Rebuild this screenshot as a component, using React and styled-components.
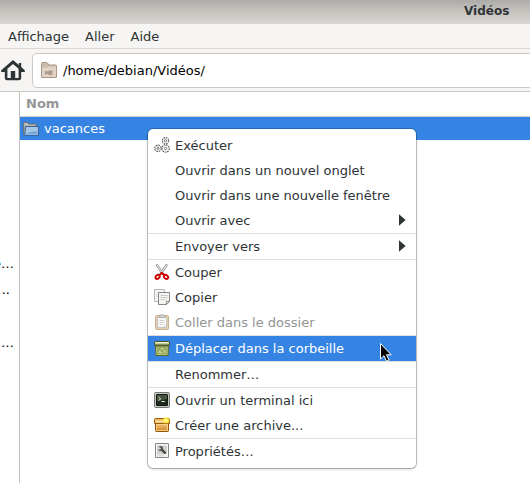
import React from "react";
import styled, { createGlobalStyle, css } from "styled-components";

const GlobalStyle = createGlobalStyle`
  * { box-sizing: border-box; }
  html, body { margin: 0; overflow: hidden; background: #fff; }
  body { font: 13px/25px "DejaVu Sans", sans-serif; color: #2e3436; }
  svg { display: block; flex: none; }
`;

const Window = styled.main`
  position: relative;
  display: flex;
  flex-direction: column;
  width: 530px;
  height: 483px;
  overflow: hidden;
  background: #fff;
`;

const TitleBar = styled.header`
  height: 24px;
  padding-left: 464px;
  background: linear-gradient(#acaba8, #c5c2be 45%, #d8d5d2);
  font-size: 12px;
  font-weight: bold;
  line-height: 22px;
  white-space: nowrap;
`;

const MenuBar = styled.nav`
  display: flex;
  gap: 16px;
  height: 25px;
  padding-left: 8px;
  background: #f6f5f4;
  border-bottom: 1px solid #dcdad7;
`;

const Toolbar = styled.div`
  display: flex;
  align-items: center;
  gap: 6px;
  height: 43px;
  padding-top: 1px;
  background: #f6f5f4;
  border-bottom: 1px solid #cdc7c2;
`;

const PathEntry = styled.div`
  display: flex;
  align-items: center;
  gap: 6px;
  flex: none;
  width: 510px;
  height: 35px;
  padding: 0 0 1px 8px;
  background: #fff;
  border: 1px solid #cdc7c2;
  border-radius: 5px;
  color: #000;
`;

const Body = styled.div`
  display: flex;
  flex: 1;
`;

const Sidebar = styled.aside`
  display: flex;
  flex-direction: column;
  align-items: flex-end;
  width: 20px;
  padding: 159px 5px 0 0;
  overflow: hidden;
  border-right: 1px solid #c6c4c2;
  color: #000;
  white-space: nowrap;
`;

const SidebarLabel = styled.span`
  flex: none;
  height: 26px;
  margin-right: ${(p) => p.$inset || 0}px;
  margin-bottom: ${(p) => p.$after || 0}px;
`;

const FileList = styled.section`
  flex: 1;
`;

const ColumnHeader = styled.div`
  height: 25px;
  padding-left: 6px;
  border-bottom: 1px solid #d5d0cc;
  color: #949796;
  font-weight: bold;
  line-height: 24px;
`;

const FileRow = styled.div`
  display: flex;
  align-items: center;
  gap: 5px;
  height: 23px;
  padding-left: 3px;
  background: #3584e4;
  color: #fff;

  svg { margin-top: 1px; }
`;

const ContextMenu = styled.div`
  position: absolute;
  left: 147px;
  top: 128px;
  width: 270px;
  height: 341px;
  padding: 4px 0;
  overflow: hidden;
  background: #fff;
  background-clip: padding-box;
  border: 1px solid rgba(0, 0, 0, 0.2);
  border-radius: 6px;
`;

const MenuShadow = styled.div`
  position: absolute;
  left: 148px;
  top: 130px;
  width: 268px;
  height: 338px;
  border-radius: 6px;
  box-shadow: 0 1px 3px rgba(0, 0, 0, 0.25);
`;

const MenuItem = styled.div`
  display: flex;
  align-items: center;
  height: 25px;
  padding: 0 10px 0 6px;
  white-space: nowrap;
  ${(p) => p.$disabled && css`color: #929595;`}
  ${(p) => p.$active && css`background: #3584e4; color: #fff;`}

  svg { margin-bottom: 1px; }
`;

const IconSlot = styled.span`
  width: 16px;
  margin-right: 5px;
`;

const ItemLabel = styled.span`
  flex: 1;
`;

const Separator = styled.div`
  height: 1px;
  background: #e1dfdd;
`;

const Pointer = styled.svg`
  position: absolute;
  left: 379px;
  top: 342px;
`;

const Icon = (props) => <svg width="16" height="16" viewBox="0 0 16 16" {...props} />;

const HomeIcon = () => (
  <svg width="26" height="24" viewBox="0 .5 26 24" fill="#2e3436">
    <path d="M13 1.5 1.2 11.7v1.8h3.6v6q0 2.3 2.3 2.3h11.8q2.3 0 2.3-2.3v-6h3.6v-1.8l-3.6-3.1V4.5h-2.4v2.1zM13 5.4l5.6 4.8v9.2h-3.4v-7h-4.4v7H7.4v-9.2z" fillRule="evenodd" />
  </svg>
);

const VideoFolderIcon = () => (
  <Icon>
    <path d="M.5 15V1.5Q.5.5 1.5.5h4q1 0 1.5 1.2l.6 1.3h6.9q1 0 1 1v11q0 .5-.5.5H1q-.5 0-.5-.5z" fill="#cdbcac" stroke="#ab9685" />
    <path d="M1 5.5h5.5l1-1H15V15H1z" fill="#e0d4c9" />
    <path d="M4 9h2v1l2-1.5h3.5v4.5H8l-2-1.5v1H4z" fill="#b09a88" />
  </Icon>
);

const FolderIcon = () => (
  <Icon>
    <path d="M.5 14V2.5q0-1 1-1h3l1 1.5h7q1 0 1 1V7" fill="#a9aaa5" stroke="#6f726c" />
    <path d="M1.5 3h3M2 5h10" stroke="#d4d4cf" />
    <path d="M2.5 5.5h13v8.8H1.8z" fill="#74a5d5" stroke="#315f93" />
    <path d="M3.5 6.5h11v3.8q-6 .1-11.2 2z" fill="#a6c7e7" />
    <path d="M3.5 6.5h11v7H2.8z" fill="none" stroke="#b2cfeb" strokeWidth=".7" />
  </Icon>
);

const Gear = ({ x, y, r }) => (
  <g>
    <circle cx={x} cy={y} r={r} fill="#f6f6f5" stroke="#555955" strokeWidth="1.1" strokeDasharray="1.6 .9" />
    <circle cx={x} cy={y} r="1.1" fill="#fff" stroke="#5a5e5a" strokeWidth=".8" />
  </g>
);

const GearsIcon = () => (
  <Icon>
    <Gear x={11.5} y={3.8} r={3.2} />
    <Gear x={4} y={11.3} r={3.2} />
    <Gear x={11.6} y={11.5} r={3.7} />
  </Icon>
);

const CutIcon = () => (
  <Icon>
    <path d="m3.2 1.3 5.4 8.2M12.4 1.3 7 9.5" stroke="#858986" strokeWidth="2.4" strokeLinecap="round" />
    <path d="m3.2 1.3 5 7.8M12.4 1.3l-5 7.8" stroke="#e7e8e6" strokeWidth="1.2" strokeLinecap="round" />
    <g fill="#fff" stroke="#cc0000" strokeWidth="1.9">
      <ellipse cx="3.6" cy="12.9" rx="2.3" ry="1.7" transform="rotate(-38 3.6 12.9)" />
      <ellipse cx="12" cy="12.9" rx="2.3" ry="1.7" transform="rotate(38 12 12.9)" />
    </g>
    <path d="m5.6 11 2.2-2.1 2.2 2.1" stroke="#cc0000" strokeWidth="2" fill="none" />
  </Icon>
);

const CopyIcon = () => (
  <Icon>
    <path d="M.5.5h10v12H.5z" fill="#f5f5f3" stroke="#b7b9b5" />
    <path d="M2.5 3.5h6M2.5 5.5h6M2.5 7.5h6" stroke="#dddedb" />
    <path d="M4.5 3.5h11v9l-3 3h-8z" fill="#f4f4f2" stroke="#858884" />
    <path d="M6.5 6.5h7M6.5 8.5h7M6.5 10.5h5" stroke="#c9cbc8" />
    <path d="M12.3 15.5v-3.2h3.2z" fill="#fff" stroke="#858884" />
  </Icon>
);

const PasteIcon = () => (
  <Icon opacity=".62">
    <rect x="1.5" y="1.5" width="13" height="14" rx="1" fill="#d9b27c" stroke="#a68251" />
    <path d="M3.5 3.5h9v10h-9z" fill="#f4f4f2" stroke="#a1a39e" />
    <path d="M5.5 6.5h5M5.5 8.5h5M5.5 10.5h3" stroke="#b9bbb7" />
    <path d="M10 13.5V11h2.5z" fill="#c4c6c2" />
    <path d="M5 3.5V2h1.5L7 .5h2L9.5 2H11v1.5z" fill="#bebfbb" stroke="#777974" strokeWidth=".8" />
  </Icon>
);

const TrashIcon = () => (
  <Icon>
    <path d="M1.5 5.5h13l-.5 10H2z" fill="#98ab5e" stroke="#5c6a28" />
    <path d="M2.7 6.5h10.6l-.4 8H3.1z" fill="none" stroke="#b4c27e" />
    <path d="M1.5 1.5h13q1 0 1 1v2.5H.5V2.5q0-1 1-1z" fill="#c4ce9d" stroke="#46501e" />
    <path d="M2 2.5h12" stroke="#eef2d6" />
    <path d="M2 6h12" stroke="#56632a" />
    <path d="m6.7 9.2 1.3-1.2 1.5 1.1M10.3 10l.5 1.8-1.7.6M7.6 12.8l-2-.4.5-1.9" fill="none" stroke="#dce5b8" strokeWidth=".9" />
  </Icon>
);

const TerminalIcon = () => (
  <Icon>
    <rect x=".5" y=".5" width="15" height="15" rx="1.2" fill="#c4c6c1" stroke="#777974" />
    <rect x="2.5" y="2.5" width="11" height="11" rx=".5" fill="#202b20" stroke="#111711" />
    <path d="M3 3h10v4L3 9.3z" fill="#46543e" />
    <path d="m4.5 5 2.2 1.8-2.2 1.8M7.5 9.5h3.3" fill="none" stroke="#e2edda" />
  </Icon>
);

const ArchiveIcon = () => (
  <Icon>
    <defs>
      <radialGradient id="spark">
        <stop offset="0" stopColor="#fffff0" />
        <stop offset=".35" stopColor="#fff34f" />
        <stop offset="1" stopColor="#ffe600" stopOpacity="0" />
      </radialGradient>
      <linearGradient id="box" x2="0" y2="1">
        <stop stopColor="#f5c981" />
        <stop offset="1" stopColor="#cd7b1b" />
      </linearGradient>
    </defs>
    <path d="M1.5 6.5h13v7q0 1-1 1h-11q-1 0-1-1z" fill="url(#box)" stroke="#8f5206" />
    <path d="M2.5 7.5h11v6h-11z" fill="none" stroke="#f8cf8b" />
    <path d="M1.5 1.5q-1 0-1 1v4h15v-4q0-1-1-1z" fill="#efb864" stroke="#995c0d" />
    <path d="M1.5 4.5h13" stroke="#ffe3ac" strokeWidth="1.6" />
    <circle cx="12" cy="3.2" r="4.3" fill="url(#spark)" />
  </Icon>
);

const PropertiesIcon = () => (
  <Icon>
    <path d="M1.5.5h13v14h-13z" fill="#f7f7f6" stroke="#858884" />
    <path d="M3 2.5h10v9H3z" fill="#d0d1ce" />
    <path d="M4.4 3.8q2.8-1.9 4.2.2.7 1.1.2 2l3.6 3.6-1.7 1.7-3.6-3.6q-1.9.8-3-1l2.4-.2.7-1.4z" fill="#464b48" />
    <path d="M3 12.8h7" stroke="#cfd1ce" />
  </Icon>
);

const SubmenuArrow = () => (
  <svg width="7" height="12" viewBox="0 0 7 12">
    <path d="M0 .2v11.6L6.6 6z" fill="#2e3436" />
  </svg>
);

const entries = [
  { label: "Exécuter", icon: <GearsIcon /> },
  { label: "Ouvrir dans un nouvel onglet" },
  { label: "Ouvrir dans une nouvelle fenêtre" },
  { label: "Ouvrir avec", submenu: true, divided: true },
  { label: "Envoyer vers", submenu: true, divided: true },
  { label: "Couper", icon: <CutIcon /> },
  { label: "Copier", icon: <CopyIcon /> },
  { label: "Coller dans le dossier", icon: <PasteIcon />, disabled: true, divided: true },
  { label: "Déplacer dans la corbeille", icon: <TrashIcon />, active: true, divided: true },
  { label: "Renommer…", divided: true },
  { label: "Ouvrir un terminal ici", icon: <TerminalIcon /> },
  { label: "Créer une archive...", icon: <ArchiveIcon />, divided: true },
  { label: "Propriétés…", icon: <PropertiesIcon /> },
];

export default function App() {
  return (
    <>
      <GlobalStyle />
      <Window>
        <TitleBar>Vidéos</TitleBar>
        <MenuBar>
          <span>Affichage</span>
          <span>Aller</span>
          <span>Aide</span>
        </MenuBar>
        <Toolbar>
          <HomeIcon />
          <PathEntry>
            <VideoFolderIcon />
            <span>/home/debian/Vidéos/</span>
          </PathEntry>
        </Toolbar>
        <Body>
          <Sidebar>
            <SidebarLabel>e…</SidebarLabel>
            <SidebarLabel $inset={4} $after={27}>..</SidebarLabel>
            <SidebarLabel>…</SidebarLabel>
          </Sidebar>
          <FileList>
            <ColumnHeader>Nom</ColumnHeader>
            <FileRow>
              <FolderIcon />
              <span>vacances</span>
            </FileRow>
          </FileList>
        </Body>
        <MenuShadow />
        <ContextMenu>
          {entries.map(({ label, icon, submenu, disabled, active, divided }) => (
            <React.Fragment key={label}>
              <MenuItem $disabled={disabled} $active={active}>
                <IconSlot>{icon}</IconSlot>
                <ItemLabel>{label}</ItemLabel>
                {submenu && <SubmenuArrow />}
              </MenuItem>
              {divided && <Separator />}
            </React.Fragment>
          ))}
        </ContextMenu>
        <Pointer width="14" height="22" viewBox="0 0 14 22">
          <path d="M1.5 1.5v15.5l3.4-3.3 2.6 5.6 2.6-1.3-2.6-5.2h4.7z" fill="#050505" stroke="#fff" />
        </Pointer>
      </Window>
    </>
  );
}
